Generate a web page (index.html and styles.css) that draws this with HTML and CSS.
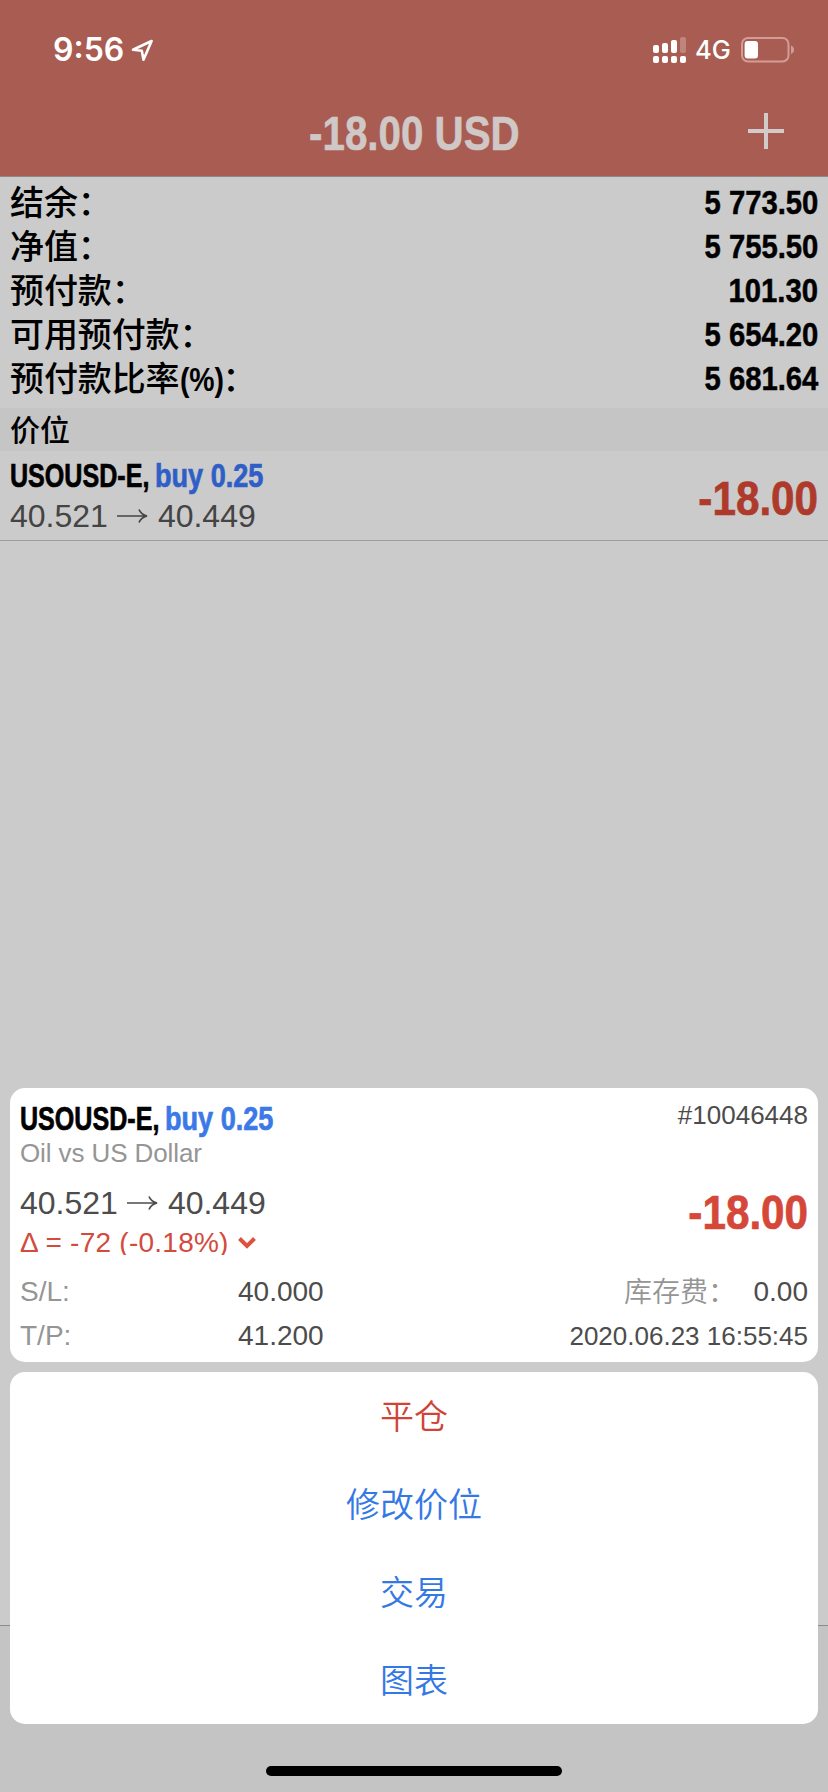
FILE: index.html
```html
<!DOCTYPE html>
<html lang="zh-CN">
<head>
<meta charset="utf-8">
<title>-18.00 USD</title>
<link rel="stylesheet" href="styles.css">
</head>
<body>
<div class="screen">
  <header class="header">
    <div class="status">
      <span class="clock">9:56</span>
      <svg class="location" width="24" height="24" viewBox="0 0 24 24"><path d="M20.600 3 2 11.700l8.800 1.100 1.700 9z"/></svg>
      <svg class="signal" width="34" height="28" viewBox="0 0 34 28">
        <rect x="0" y="9" width="6" height="8" rx="2"/><rect x="9" y="7" width="6" height="10" rx="2"/><rect x="18" y="4" width="6" height="13" rx="2"/><rect class="faint" x="27" y="1" width="6" height="16" rx="2"/>
        <rect x="0" y="20" width="6" height="7" rx="2"/><rect x="9" y="20" width="6" height="7" rx="2"/><rect x="18" y="20" width="6" height="7" rx="2"/><rect x="27" y="20" width="6" height="7" rx="2"/>
      </svg>
      <span class="network">4G</span>
      <svg class="battery" width="54" height="26" viewBox="0 0 54 26"><rect class="shell" x="1" y="1" width="46.5" height="23.5" rx="6"/><rect class="charge" x="3.6" y="4" width="13.4" height="17.4" rx="3"/><path class="cap" d="M50 8.600q3 1.200 3 4.200t-3 4.200z"/></svg>
    </div>
    <div class="titlebar">
      <h1 class="title"><span class="squeeze">-18.00 USD</span></h1>
      <svg class="plus" width="36" height="36" viewBox="0 0 36 36"><path d="M18 0v36M0 18h36"/></svg>
    </div>
  </header>
  <main class="content">
    <dl class="summary">
      <div class="row"><dt>结余：</dt><dd>5 773.50</dd></div>
      <div class="row"><dt>净值：</dt><dd>5 755.50</dd></div>
      <div class="row"><dt>预付款：</dt><dd>101.30</dd></div>
      <div class="row"><dt>可用预付款：</dt><dd>5 654.20</dd></div>
      <div class="row"><dt>预付款比率<span class="percent">(%)</span>：</dt><dd>5 681.64</dd></div>
    </dl>
    <h2 class="section">价位</h2>
    <div class="position">
      <div class="details">
        <div class="deal"><span class="symbol">USOUSD-E,</span><span class="side">buy 0.25</span></div>
        <div class="prices"><span>40.521</span><svg class="arrow" width="32" height="16" viewBox="0 0 32 16"><path d="M0 8h29M22 1.500q2 5 8 6.500-6 1.500-8 6.500"/></svg><span>40.449</span></div>
      </div>
      <div class="profit">-18.00</div>
    </div>
  </main>
  <footer class="tabbar"></footer>

  <div class="sheet">
    <section class="card info">
      <div class="line heading"><div class="deal"><span class="symbol">USOUSD-E,</span><span class="side">buy 0.25</span></div><span class="ticket">#10046448</span></div>
      <div class="description">Oil vs US Dollar</div>
      <div class="line quote">
        <div class="moves">
          <div class="prices"><span>40.521</span><svg class="arrow" width="32" height="16" viewBox="0 0 32 16"><path d="M0 8h29M22 1.500q2 5 8 6.500-6 1.500-8 6.500"/></svg><span>40.449</span></div>
          <div class="delta"><span>Δ = -72 (-0.18%)</span><svg class="chevron" width="18" height="12" viewBox="0 0 18 12"><path d="m1.500 1.500 7.500 7.500 7.500-7.500"/></svg></div>
        </div>
        <div class="profit">-18.00</div>
      </div>
      <div class="line field"><span class="label">S/L:</span><span class="value">40.000</span><span class="swap">库存费：</span><span class="amount">0.00</span></div>
      <div class="line field"><span class="label">T/P:</span><span class="value">41.200</span><span class="time">2020.06.23 16:55:45</span></div>
    </section>
    <nav class="card actions">
      <a class="action danger">平仓</a>
      <a class="action">修改价位</a>
      <a class="action">交易</a>
      <a class="action">图表</a>
    </nav>
    <div class="home"></div>
  </div>
</div>
</body>
</html>
```
FILE: styles.css
```css
* { box-sizing: border-box; margin: 0; padding: 0; }
body { background: #cbcbcb; font-family: "Liberation Sans", "Noto Sans CJK SC", sans-serif; }
svg { display: block; flex: none; fill: none; }
.screen { position: relative; display: flex; flex-direction: column; width: 828px; height: 1792px; overflow: hidden; white-space: nowrap; }

.header { height: 177px; background: #a85c52; border-bottom: 1px solid #8f8886; }
.status { display: flex; align-items: center; height: 100px; padding: 0 33px 0 53px; color: #fff; font-family: Inter, sans-serif; }
.clock { width: 78px; font-size: 32px; font-weight: 600; line-height: 40px; }
.location path { stroke: #fff; stroke-width: 2.6; stroke-linejoin: round; }
.signal { margin-left: auto; fill: #fff; }
.faint { opacity: .25; }
.network { width: 46px; margin-left: 8px; font-size: 25.5px; font-weight: 500; line-height: 30px; }
.shell { stroke: #d39d96; stroke-width: 2; }
.charge { fill: #fff; }
.cap { fill: #d39d96; }
.titlebar { position: relative; display: flex; justify-content: center; height: 66px; }
.title { color: #d0c8c6; font-size: 48px; line-height: 68px; font-weight: 700; -webkit-text-stroke: .6px currentColor; }
.squeeze { display: inline-block; transform: scaleX(.84); }
.plus { position: absolute; right: 44px; top: 13px; stroke: #d3cbc9; stroke-width: 4; }

.content { flex: none; height: 1448px; background: #cbcbcb; }
.summary { height: 231px; padding-top: 3px; }
.row { display: flex; justify-content: space-between; height: 44px; padding: 0 10px; line-height: 44px; color: #000; }
dt { font: 500 34px/42px "Noto Sans CJK SC", sans-serif; letter-spacing: -0.1px; }
dd { font-size: 34px; font-weight: 700; -webkit-text-stroke: .5px currentColor; transform: scaleX(.86); transform-origin: right; }
.percent { display: inline-block; width: 43px; font-family: "Liberation Sans", sans-serif; font-weight: 700; font-size: 33px; line-height: 40px; transform: scaleX(.86); transform-origin: left; }
.section { height: 43px; padding-left: 10px; background: #c5c5c5; font: 500 30px/41px "Noto Sans CJK SC", sans-serif; }
.position { display: flex; justify-content: space-between; height: 90px; padding: 3px 10px 0; border-bottom: 1px solid #9c9c9c; color: #444; }
.deal { display: flex; height: 42px; font-size: 33px; line-height: 43px; font-weight: 700; -webkit-text-stroke: .7px currentColor; }
.symbol { width: 145px; color: #000; transform: scaleX(.76); transform-origin: left; }
.side { color: #2f5fc6; transform: scaleX(.82); transform-origin: left; }
.prices { display: flex; align-items: center; font-size: 32px; line-height: 40px; }
.arrow { margin: 0 9px 0 9px; stroke: currentColor; stroke-width: 1.7; }
.profit { color: #ae3a2c; font-size: 48px; line-height: 90px; font-weight: 700; -webkit-text-stroke: .7px currentColor; transform: scaleX(.88); transform-origin: right; }
.tabbar { flex: 1; background: #c4c4c4; border-top: 1px solid #8c8c8c; }

.sheet { position: absolute; left: 10px; right: 10px; top: 1088px; display: flex; flex-direction: column; gap: 10px; }
.card { background: #fff; border-radius: 15px; }
.info { height: 274px; padding: 9px 10px 0; color: #4c4c4c; }
.line { display: flex; justify-content: space-between; }
.heading { height: 41px; }
.info .side { color: #3b79e8; }
.ticket { font-size: 26px; line-height: 36px; }
.description { height: 31px; color: #959595; font-size: 26px; line-height: 31px; letter-spacing: -0.1px; }
.quote { height: 101px; padding-top: 14px; }
.delta { display: flex; align-items: flex-start; height: 32px; overflow: hidden; color: #d24b3e; font-size: 28px; line-height: 40px; letter-spacing: .25px; }
.chevron { margin: 14px 0 0 9px; stroke: #dd523e; stroke-width: 4; }
.quote .profit { color: #d54738; line-height: 60px; }
.field { height: 44px; font-size: 28px; line-height: 44px; justify-content: flex-start; }
.label { width: 218px; color: #959595; }
.swap { margin-left: auto; color: #959595; font: 350 28px/41px "Noto Sans CJK SC", sans-serif; }
.amount { width: 72px; text-align: right; }
.time { margin-left: auto; font-size: 26px; }
.actions { display: flex; flex-direction: column; height: 352px; }
.action { height: 88px; text-align: center; color: #3478e5; font: 350 34px/86px "Noto Sans CJK SC", sans-serif; }
.danger { color: #cf4436; }
.home { align-self: center; width: 296px; height: 10px; margin-top: 32px; border-radius: 5px; background: #000; }
```
